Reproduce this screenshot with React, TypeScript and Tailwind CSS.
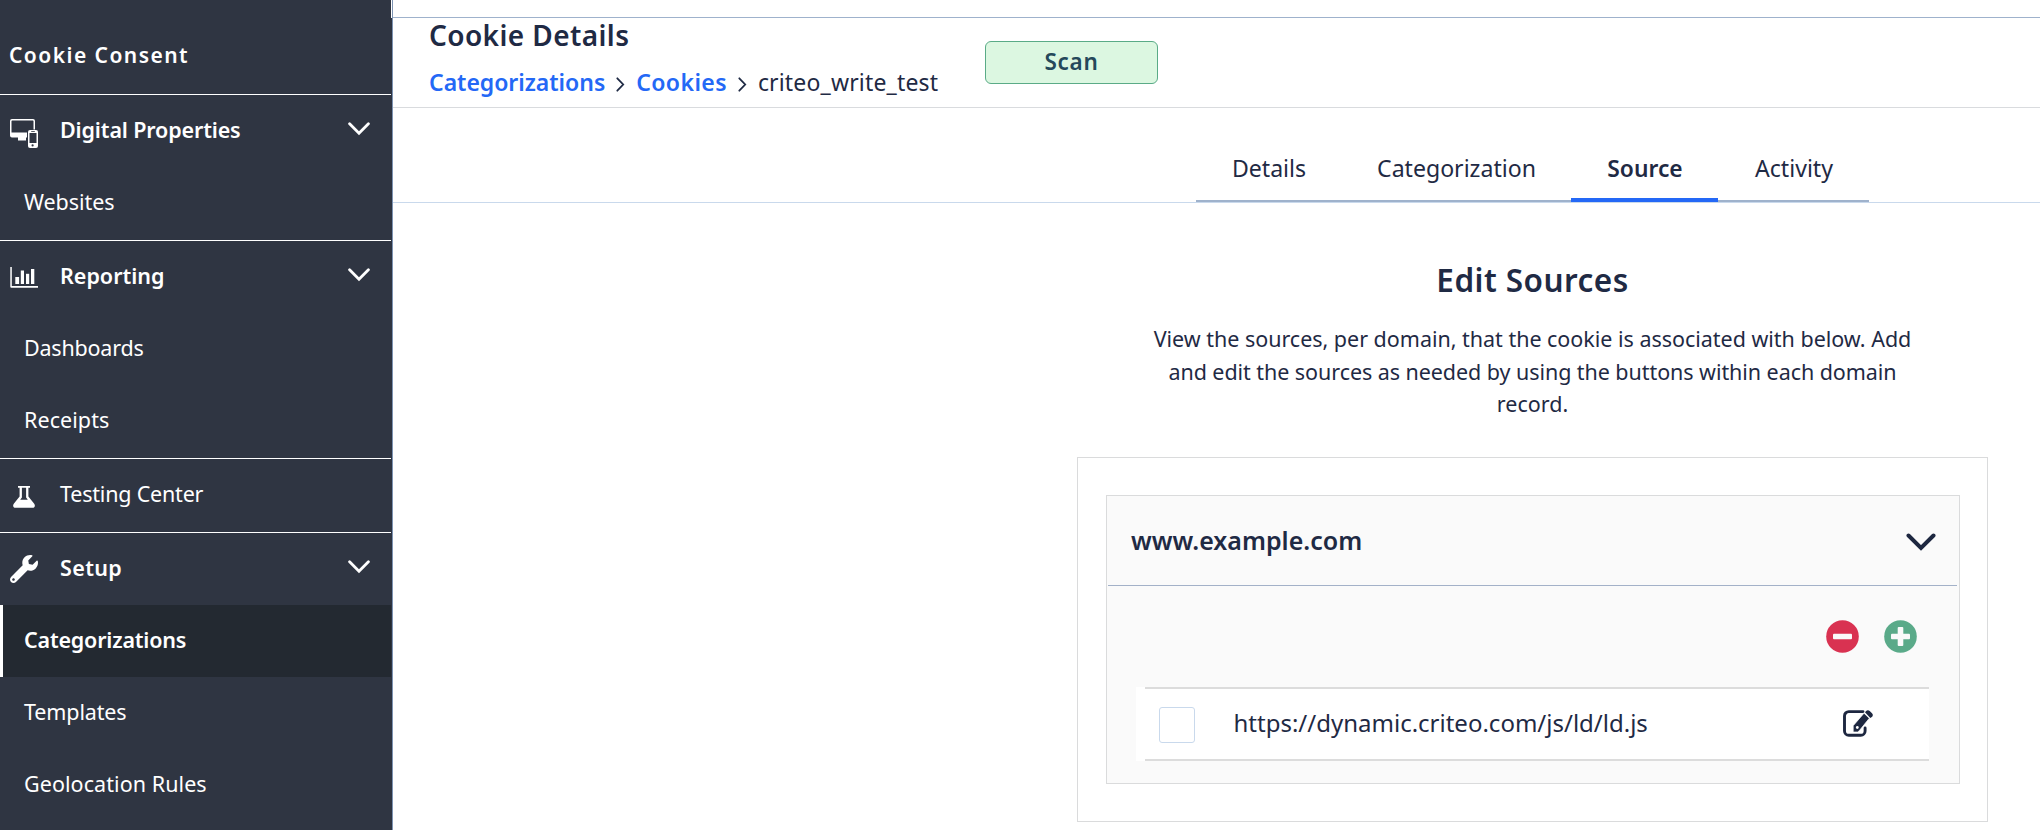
import type { ReactNode } from "react";

function DevicesIcon() {
  return (
    <svg width="28" height="29" viewBox="0 0 28 29">
      <path d="M2 0h21a2 2 0 0 1 2 2v8.500h-1.500V2.200a.7.7 0 0 0-.7-.7H2.200a.7.7 0 0 0-.7.7v11.300H17v5h-1v3H8v-3H2a2 2 0 0 1-2-2V2a2 2 0 0 1 2-2z" fill="#fff" />
      <rect x="18" y="11" width="10" height="18" rx="2" fill="#fff" />
      <rect x="19.500" y="14" width="7" height="10" fill="#2f3542" />
      <rect x="21.200" y="12" width="3.600" height="0.800" fill="#2f3542" />
      <circle cx="22.600" cy="26.400" r="1.100" fill="#2f3542" />
    </svg>
  );
}

function ChartIcon() {
  return (
    <svg width="28" height="21" viewBox="0 0 28 21" fill="#fff">
      <path d="M0.300 0h1.500v18.900h26.200v1.800H1.300a1 1 0 0 1-1-1z" />
      <rect x="5.300" y="10" width="3.800" height="7" />
      <rect x="10.800" y="3.500" width="3.200" height="13.500" />
      <rect x="16" y="6.800" width="3.200" height="10.200" />
      <rect x="21" y="2" width="3.300" height="15" />
    </svg>
  );
}

function FlaskIcon() {
  return (
    <svg width="22" height="22" viewBox="0 0 22 22">
      <path d="M5 0h12v1.800h-1.600v8.600l5.800 7.400c1.400 2 .5 3.900-1.700 3.900h-17c-2.200 0-3.100-1.900-1.700-3.900l5.800-7.400V1.800H5z" fill="#fff" />
      <path d="M8.900 1.800h4.200v9.700l1.700 2.200H7.200l1.700-2.200z" fill="#2f3542" />
    </svg>
  );
}

function WrenchIcon() {
  return (
    <svg width="28" height="28" viewBox="0 0 512 512" fill="#fff">
      <path d="M507.730 109.100c-2.240-9.030-13.540-12.090-20.120-5.510l-74.360 74.360-67.880-11.310-11.310-67.880 74.360-74.360c6.620-6.620 3.430-17.900-5.660-20.160-47.380-11.740-99.550.910-136.580 37.930-39.640 39.640-50.550 97.100-34.050 147.200L18.740 402.760c-24.990 24.990-24.990 65.510 0 90.500 24.990 24.990 65.510 24.990 90.500 0l213.210-213.210c50.120 16.710 107.470 5.680 147.370-34.220 37.070-37.070 49.700-89.320 37.910-136.730zM64 472c-13.250 0-24-10.750-24-24 0-13.260 10.750-24 24-24s24 10.740 24 24c0 13.250-10.750 24-24 24z" />
    </svg>
  );
}

function Chevron() {
  return (
    <svg width="22" height="14" viewBox="0 0 22 14" fill="none" stroke="#fff" strokeWidth="2.800" strokeLinecap="round">
      <path d="M1.600 1.800 11 11.200l9.400-9.400" />
    </svg>
  );
}

function CrumbArrow() {
  return (
    <svg width="9" height="15" viewBox="0 0 9 15" fill="none" stroke="#1f2a44" strokeWidth="1.800" strokeLinecap="round">
      <path d="M1.300 1.300 7.200 7.500l-5.900 6.200" />
    </svg>
  );
}

function EditIcon() {
  return (
    <svg width="30" height="27" viewBox="0 0 30 27">
      <path d="M20 1.600H5.800A4.300 4.300 0 0 0 1.500 5.900v15A4.300 4.300 0 0 0 5.800 25.200H17.800a4.300 4.300 0 0 0 4.300-4.300V18" fill="none" stroke="#1d2740" strokeWidth="2.900" strokeLinecap="round" />
      <path d="M10.200 22v-6.300L21 3.200 26.300 8.300 16 21l-1.400 1z" fill="#1d2740" stroke="#fff" strokeWidth="0.700" />
      <path d="M22 2.300 23.100 1.100c1-1.100 2.500-1.100 3.600-.1l2.300 2.200c1.100 1.100 1.100 2.400.2 3.500l-1.900 1.300z" fill="#1d2740" />
      <circle cx="14.300" cy="17.500" r="1.400" fill="#fff" />
    </svg>
  );
}

function GroupHeader({ icon, label, track, open = true, strong = true }: { icon: ReactNode; label: string; track: string; open?: boolean; strong?: boolean }) {
  return (
    <div className="flex h-[73px] items-center border-t border-white">
      <div className="flex w-[59px] justify-center pr-[21px] pl-[10px]">
        <div className="flex w-7 shrink-0 justify-center">{icon}</div>
      </div>
      <span className={`${strong ? "pl-px font-semibold" : "pl-px font-normal"} ${track} flex-1 pb-[2px]`}>{label}</span>
      {open && (
        <div className="pr-[21px] pb-[5px]">
          <Chevron />
        </div>
      )}
    </div>
  );
}

function Item({ label, track, active = false }: { label: string; track: string; active?: boolean }) {
  return (
    <div
      className={`flex h-[72px] items-center pb-[2px] ${track} ${
        active ? "border-l-3 border-white bg-[#232931] pl-[21px] font-semibold" : "pl-[24px]"
      }`}
    >
      {label}
    </div>
  );
}

function Sidebar() {
  return (
    <aside className="relative h-full w-[393px] shrink-0 overflow-hidden border-r border-[#7d93b2] bg-[#2f3542] pr-px text-[21.5px] leading-none text-white">
      <div className="absolute top-0 right-0 h-[18px] w-px bg-white" />
      <div className="flex h-[94px] items-center pt-[17px] pl-[9px] text-[21px] font-semibold tracking-[1.46px]">Cookie Consent</div>
      <div className="pb-px">
        <GroupHeader icon={<div className="pt-[5px]"><DevicesIcon /></div>} label="Digital Properties" track="tracking-[-0.14px]" />
        <Item label="Websites" track="tracking-[-0.05px]" />
      </div>
      <div className="pb-px">
        <GroupHeader icon={<ChartIcon />} label="Reporting" track="tracking-normal" />
        <Item label="Dashboards" track="tracking-[-0.2px]" />
        <Item label="Receipts" track="tracking-[0.07px]" />
      </div>
      <div className="pb-px">
        <GroupHeader icon={<div className="pt-[3px]"><FlaskIcon /></div>} label="Testing Center" track="tracking-[-0.2px]" open={false} strong={false} />
      </div>
      <GroupHeader icon={<WrenchIcon />} label="Setup" track="tracking-[0.37px]" />
      <Item label="Categorizations" track="tracking-[-0.19px]" active />
      <Item label="Templates" track="tracking-[-0.13px]" />
      <Item label="Geolocation Rules" track="tracking-[0.07px]" />
    </aside>
  );
}

function PageHeader() {
  return (
    <header className="flex h-[90px] items-start border-b border-[#d9dbde] pl-[36px]">
      <div className="w-[556px]">
        <h1 className="pt-[2px] text-[28px] leading-[30px] font-semibold tracking-[0.4px]">Cookie Details</h1>
        <nav className="flex items-center pt-[17px] text-[23px] leading-[30px]">
          <a className="font-semibold tracking-[-0.03px] text-[#2468f6]">Categorizations</a>
          <span className="px-[11px] pt-[5px]"><CrumbArrow /></span>
          <a className="font-semibold tracking-[0.4px] text-[#2468f6]">Cookies</a>
          <span className="px-[11px] pt-[5px]"><CrumbArrow /></span>
          <span className="tracking-[0.17px]">criteo_write_test</span>
        </nav>
      </div>
      <button className="mt-[23px] h-[43px] w-[173px] rounded-[6px] border border-[#5aab87] bg-[#dcf7e1] text-[22.5px] leading-none font-semibold tracking-[0.75px] text-[#25485a]">
        Scan
      </button>
    </header>
  );
}

function Tabs() {
  const tab = "flex items-center justify-center border-[#9fb2cc] border-b-2 pb-[2px] pl-px";
  return (
    <div className="flex h-[95px] items-end border-b border-[#c9d9ec] pl-[803px] text-[23.1px] leading-none">
      <div className="flex h-[62px] w-[673px]">
        <div className={`${tab} w-[145px]`}>Details</div>
        <div className={`${tab} w-[230px]`}>Categorization</div>
        <div className="flex w-[147px] items-center justify-center border-b-4 border-[#2468f6] pl-px text-[22.8px] font-semibold">Source</div>
        <div className={`${tab} w-[151px]`}>Activity</div>
      </div>
    </div>
  );
}

function SourceCard() {
  return (
    <section className="mt-[36px] h-[365px] w-[911px] border border-[#dadbdc] px-[28px] pt-[37px]">
      <div className="h-[289px] w-[854px] border border-[#dadbdc] bg-[#fafafa]">
        <div className="mr-[2px] ml-px flex h-[90px] items-center justify-between border-b border-[#a3b1c8] pr-[21px] pl-[23px]">
          <span className="pt-px text-[25px] leading-none font-semibold">www.example.com</span>
          <svg className="mt-[4px]" width="30" height="18" viewBox="0 0 30 18" fill="none" stroke="#1d2740" strokeWidth="4" strokeLinecap="round">
            <path d="m2.500 2.500 12.500 12.400L27.500 2.500" />
          </svg>
        </div>
        <div className="flex h-[101px] items-center justify-end gap-[25px] pr-[42px]">
          <svg width="33" height="33" viewBox="0 0 33 33">
            <circle cx="16.500" cy="16.500" r="16.300" fill="#d93251" />
            <rect x="7" y="13.700" width="19" height="5.600" rx="1" fill="#fafafa" />
          </svg>
          <svg width="33" height="33" viewBox="0 0 33 33">
            <circle cx="16.500" cy="16.500" r="16.300" fill="#5aaa89" />
            <rect x="7" y="13.700" width="19" height="5.600" rx="1" fill="#fafafa" />
            <rect x="13.700" y="7" width="5.600" height="19" rx="1" fill="#fafafa" />
          </svg>
        </div>
        <div className="mr-[30px] ml-[29px] bg-white pl-[9px]">
          <div className="flex h-[74px] items-center border-y-2 border-[#dcdcdc] pr-[56px] pl-[14px]">
            <div className="mt-[2px] h-[36px] w-[36px] rounded-[3px] border border-[#c9d9ec]" />
            <span className="flex-1 pb-[2px] pl-[38.500px] text-[24px] leading-none">https://dynamic.criteo.com/js/ld/ld.js</span>
            <EditIcon />
          </div>
        </div>
      </div>
    </section>
  );
}

export default function App() {
  return (
    <div className="flex h-[830px] w-[2040px] overflow-hidden bg-white font-['Noto_Sans',sans-serif] text-[#1f2a44]">
      <Sidebar />
      <main className="flex flex-1 flex-col">
        <div className="h-[18px] border-b border-[#9fb2cc]" />
        <PageHeader />
        <Tabs />
        <div className="ml-[684px] flex w-[911px] flex-col items-center self-start">
          <h2 className="pt-[57px] text-[31.5px] leading-[40px] font-semibold tracking-[0.45px]">Edit Sources</h2>
          <p className="pt-[23px] text-center text-[21.5px] leading-[32.6px]">
            <span className="tracking-[-0.02px]">View the sources, per domain, that the cookie is associated with below. Add</span>
            <br />
            <span className="tracking-[-0.06px]">and edit the sources as needed by using the buttons within each domain</span>
            <br />
            record.
          </p>
          <SourceCard />
        </div>
      </main>
    </div>
  );
}
